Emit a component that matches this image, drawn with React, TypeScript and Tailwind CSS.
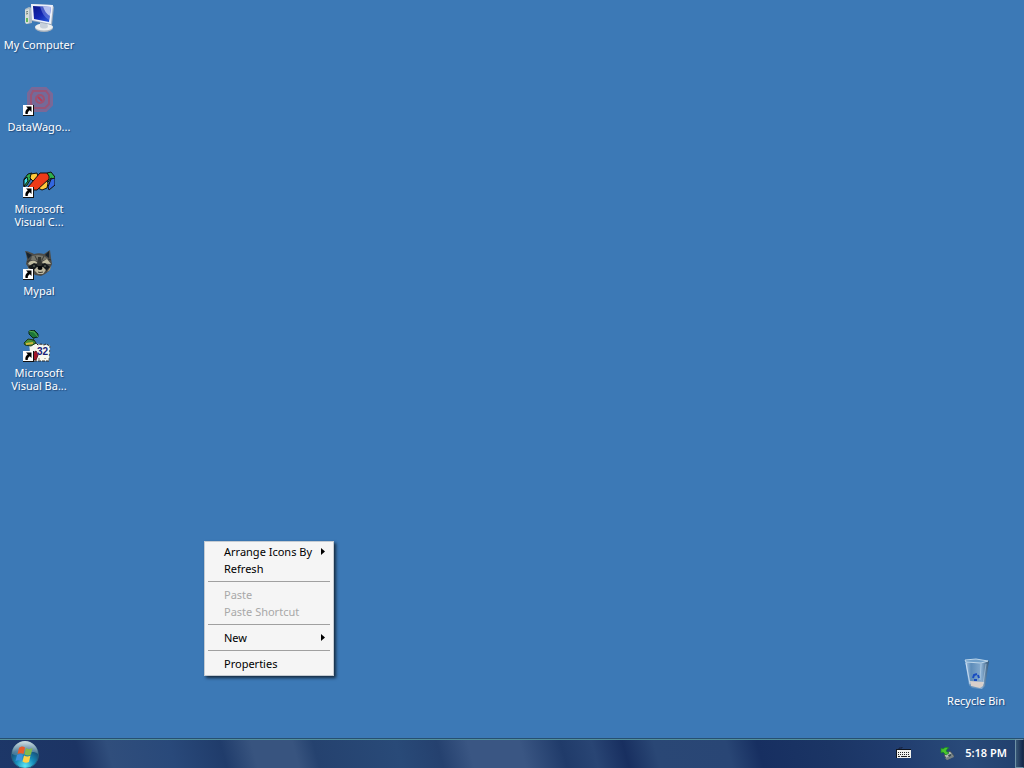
import React, { useState } from 'react';

type DesktopIconProps = {
  lines: string[];
  shortcut?: boolean;
  children: React.ReactNode;
};

const ShortcutArrow = () => (
  <g>
    <rect x="0" y="21" width="11" height="11" fill="#111" />
    <rect x="0" y="21" width="10" height="10" fill="#fff" />
    <path d="M3 22.500h5.500V28L6.800 26.300C5.300 27.300 4.600 28.400 4.800 30H2.500c-.5-2.400.3-4.200 2.300-5.700z" fill="#000" />
  </g>
);

const DesktopIcon = ({ lines, shortcut, children }: DesktopIconProps) => (
  <button type="button" className="flex h-[82px] w-[78px] flex-col items-center pt-[2px] text-white">
    <svg viewBox="0 0 32 32" className="size-8 shrink-0" aria-hidden="true">
      {children}
      {shortcut && <ShortcutArrow />}
    </svg>
    <span className="mt-1 text-center text-[11px] leading-[13px] [text-shadow:1px_1px_1px_rgba(10,30,70,0.5)]">
      {lines.map((line) => (
        <span key={line} className="block whitespace-nowrap">
          {line}
        </span>
      ))}
    </span>
  </button>
);

const ComputerArt = () => (
  <>
    <defs>
      <linearGradient id="screen" x1="0" y1="0" x2="1" y2="1">
        <stop offset="0" stopColor="#0a1788" />
        <stop offset="0.5" stopColor="#1226b4" />
        <stop offset="1" stopColor="#2c63e0" />
      </linearGradient>
    </defs>
    <path d="M2 7l4-2 3 1v15l-5 1-2-2z" fill="#aebcc6" />
    <path d="M2 8l4-1v14l-3 1-1-2z" fill="#d5dcd8" />
    <path d="M3 10l2-.5M3 12l2-.5" stroke="#697b70" />
    <path d="M3 16h2v4H3z" fill="#62b75b" />
    <ellipse cx="21" cy="26" rx="9" ry="4" fill="#a6b1bd" />
    <ellipse cx="21" cy="25" rx="9" ry="3.500" fill="#eef0f0" />
    <path d="M17 20h7l1 5c-2 2-6 2-8 0z" fill="#c7d0da" />
    <path d="M8 2l21 1 2 2-2 18-20-4z" fill="#9facbd" />
    <path d="M8 2l22 1-2 19L9 18z" fill="#edf1fa" />
    <path d="M10 4l18 1-2 15-15-3z" fill="url(#screen)" />
    <path d="M17 4.300l11 .7-2 13c-5-3-7-7-9-13.700z" fill="#6f83e0" opacity=".6" />
    <path d="M20 4.500l8 .5-1.200 9c-3.300-2-5.300-5-6.800-9.500z" fill="#e3ebff" opacity=".7" />
  </>
);

const WagonArt = () => (
  <g className="blur-[0.6px]" fill="none" stroke="#b04660">
    <path d="M9 4h14l6 6v11l-6 6H11l-6-6V9z" fill="#8c648e" stroke="#95618a" strokeWidth="2" opacity=".7" />
    <path d="M10 7h13l3 4v9l-4 4H11l-3-4v-9z" strokeWidth="2" opacity=".6" />
    <circle cx="17" cy="15" r="4" strokeWidth="2" opacity=".7" />
    <path d="M15 13l4 4" stroke="#c53248" strokeWidth="2" opacity=".8" />
  </g>
);

const VisualCArt = () => (
  <g stroke="#101010" strokeWidth="1" strokeLinejoin="round">
    <path d="M1 13l4-5 4-1v4l-5 8-3 2z" fill="#2fae4c" />
    <path d="M1 14l3-3 1 4-4 5z" fill="#3ad6e0" />
    <path d="M8 8l6-1 1 4-4 5-4-4z" fill="#ffc93c" />
    <path d="M24 7l4-1 4 5v3l-4-2-3 4-1-4z" fill="#2fae4c" />
    <path d="M28 13l4-1v7l-6 5-1-3z" fill="#3367e0" />
    <path d="M18 18l5-4 2 3-1 5-5 2-4-2z" fill="#ffc93c" />
    <path d="M5 21L17 7h7l2 3v3L14 24H8z" fill="#ee3a18" />
  </g>
);

const RaccoonArt = () => (
  <>
    <path d="M2 3c3 0 7 2 9 3 3-1 7-1 10 0l6-4 1 8 1 6-3 7-4 3-4 2-6-1-5-5-4-6 1-5-1-5z" fill="#4d4c48" />
    <path d="M3 4l6 3-4 4zM26 3l-4 4 4 3z" fill="#17222c" />
    <path d="M9 8l6-1 6 1 4 3-8 2-9-1z" fill="#75756b" />
    <path d="M5 16c1-3 4-4 7-3l3 2-8 2zM19 14l5-3 4 5-8-.500z" fill="#c3bea2" />
    <path d="M5 19l6-4 5 2 6-2 5 4-4 4-4-1-3-2-5 3z" fill="#15191b" />
    <path d="M15 9h3l1 8-2 2-3-2z" fill="#30322e" />
    <path d="M11 22l3-3h6l3 3-3 4h-5z" fill="#bdb79f" />
    <path d="M4 19l5 4-3-1zM28 18l-4 6 3-2z" fill="#a69570" />
    <ellipse cx="17" cy="20" rx="2.500" ry="2" fill="#050708" />
    <circle cx="11" cy="18" r=".8" fill="#75806f" />
    <circle cx="22" cy="18" r=".8" fill="#75806f" />
    <path d="M12 8l2 4M21 8l-2 4M7 12l-3 2M28 12l-3-1M15 24l2 .5 3-.5" stroke="#282a26" strokeWidth=".8" />
  </>
);

const VisualBasicArt = () => (
  <>
    <path d="M6 13l21 2-1 16H8z" fill="#f6f7ef" />
    <path d="M6 14l2-1 2 1 3-1 2 2 3-1 3 1 2-1 4 2M26 31H11" fill="none" stroke="#222" strokeDasharray="3 1" />
    <path d="M27 16l-1 15" stroke="#555" strokeDasharray="2 2" />
    <path d="M6 1l5-1 4 4v3l-5 1-4-4z" fill="#1c7639" stroke="#0a2417" />
    <path d="M6 1l5 1 4 5" fill="none" stroke="#56aa51" />
    <path d="M1 13l4-4 6 1 2 3-5 3-6-1z" fill="#458d35" stroke="#203615" />
    <path d="M3 14l7-1" stroke="#d0b83b" strokeWidth="2" />
    <path d="M11 8l-1 3" stroke="#183d20" />
    <path d="M10 23l3-2 2 4-2 5-3-1z" fill="#a51325" stroke="#641020" />
    <path d="M15 28h2v2h-2zM21 28h2v1h-2z" fill="#bbb7ac" />
    <text x="14" y="25" fontSize="10" fontWeight="700" fill="#162078" fontFamily="Liberation Sans, Arial, sans-serif">
      32
    </text>
  </>
);

const RecycleArt = () => (
  <>
    <defs>
      <linearGradient id="bin" x1="0" y1="0" x2="1" y2="0">
        <stop offset="0" stopColor="#bdd4ec" />
        <stop offset="0.25" stopColor="#608eb9" />
        <stop offset="0.7" stopColor="#8fb2d3" />
        <stop offset="1" stopColor="#34526e" />
      </linearGradient>
    </defs>
    <path d="M5 2l24 1-4 25-3 3-10-1-3-3z" fill="url(#bin)" opacity=".9" />
    <path d="M10 23l14 1-1 4-3 2-9-2z" fill="#d8cfca" />
    <path d="M5 2l11-1 12 2-7 2-15-1z" fill="#6f9fc9" stroke="#bdd6ea" />
    <path d="M6 5l4 21" stroke="#d6e7fa" opacity=".8" />
    <path d="M26 6l-3 20M21 6l-1 16" stroke="#d1e5f4" opacity=".45" />
    <path d="M13 20l1-3 3-1M18 17l1 3M17 22h-3" fill="none" stroke="#174bc1" strokeWidth="2" />
  </>
);

const MenuItem = ({ label, submenu, disabled }: { label: string; submenu?: boolean; disabled?: boolean }) => (
  <button
    type="button"
    role="menuitem"
    disabled={disabled}
    className="flex h-[17px] w-full items-center justify-between pr-[5px] pl-4 text-left text-black enabled:hover:bg-[#316ac5] enabled:hover:text-white disabled:text-[#a8a8a8]"
  >
    <span>{label}</span>
    {submenu && (
      <svg viewBox="0 0 4 7" className="h-[7px] w-1" aria-hidden="true">
        <path d="M0 0l4 3.500L0 7z" fill="currentColor" />
      </svg>
    )}
  </button>
);

const MenuSeparator = () => (
  <div role="separator" className="flex h-[9px] items-center">
    <span className="h-px w-full bg-[#a0a0a0]" />
  </div>
);

const ContextMenu = () => (
  <div
    role="menu"
    className="absolute top-[541px] left-[204px] w-[130px] border border-[#c4cbd2] bg-[#f5f5f5] px-[3px] pt-px pb-[3px] text-[11px] leading-[17px] shadow-[2px_2px_3px_rgba(0,0,0,0.65)]"
  >
    <MenuItem label="Arrange Icons By" submenu />
    <MenuItem label="Refresh" />
    <MenuSeparator />
    <MenuItem label="Paste" disabled />
    <MenuItem label="Paste Shortcut" disabled />
    <MenuSeparator />
    <MenuItem label="New" submenu />
    <MenuSeparator />
    <MenuItem label="Properties" />
  </div>
);

const StartOrb = () => (
  <svg viewBox="0 0 28 28" className="size-7" aria-hidden="true">
    <defs>
      <radialGradient id="orb" cx=".5" cy=".9" r=".85">
        <stop offset="0" stopColor="#5ce7f5" />
        <stop offset=".4" stopColor="#168bb8" />
        <stop offset=".75" stopColor="#16517b" />
        <stop offset="1" stopColor="#477489" />
      </radialGradient>
      <linearGradient id="gloss" x1="0" y1="0" x2="0" y2="1">
        <stop offset="0" stopColor="#e2edf0" stopOpacity=".9" />
        <stop offset="1" stopColor="#9bb8c5" stopOpacity=".25" />
      </linearGradient>
    </defs>
    <circle cx="14" cy="14" r="13.500" fill="url(#orb)" stroke="#285d7b" />
    <path d="M1 13a13 13 0 0 1 26 0c-4-3-8-2-13 0s-9 2-13 0z" fill="url(#gloss)" />
    <path d="M8 7c2-2 4-2 6-.5L12.500 13c-2-1-4-1-6 0z" fill="#e95b2b" />
    <path d="M15 7c2 1.500 4 1.500 6.500 0L20 13.500c-2 1.500-4 1-6.500 0z" fill="#83b94a" />
    <path d="M6 14c2-1 4-1 6 0l-1.500 6c-2-1-4-1-6 0z" fill="#3e91de" />
    <path d="M13 14.500c2 1 4 1.500 6.500 0L18 21c-2 1-4 1-6.500-.5z" fill="#ffd146" />
  </svg>
);

const KeyboardIcon = () => (
  <svg viewBox="0 0 16 14" className="h-[14px] w-4" aria-hidden="true">
    <path d="M3 3V1h3V0" fill="none" stroke="#17213e" />
    <rect x="0" y="2" width="15" height="9" fill="#10151f" />
    <rect x="1" y="3" width="14" height="8" fill="#f2f2ed" />
    <path d="M2 5.500h12M2 7.500h12" stroke="#222" strokeDasharray="1 1" />
    <path d="M2 9.500h2M5 9.500h6M12 9.500h2" stroke="#222" />
  </svg>
);

const SafelyRemoveIcon = () => (
  <svg viewBox="0 0 16 16" className="size-4" aria-hidden="true">
    <path d="M5 9l6-4 4 5-7 4z" fill="#b3bab5" stroke="#445059" />
    <path d="M6 12l8-3 1 2-7 3z" fill="#778285" />
    <path d="M9 9l3-1 1 1-3 2z" fill="#30464f" />
    <path d="M2 7V2l2 1c2-2 4-2 6-1-2 0-2 2-3 3l3 2-3 2-3-3z" fill="#49c52c" stroke="#168526" strokeWidth=".7" />
  </svg>
);

const App = () => {
  const [menuOpen, setMenuOpen] = useState(true);

  return (
    <div className="relative flex min-h-screen flex-col bg-[#3c79b6] font-['Noto_Sans','Open_Sans',sans-serif] select-none">
      <main className="flex flex-1 justify-between pr-[9px]" onClick={() => setMenuOpen(false)}>
        <div className="flex flex-col">
          <DesktopIcon lines={['My Computer']}>
            <ComputerArt />
          </DesktopIcon>
          <DesktopIcon lines={['DataWago...']} shortcut>
            <WagonArt />
          </DesktopIcon>
          <DesktopIcon lines={['Microsoft', 'Visual C...']} shortcut>
            <VisualCArt />
          </DesktopIcon>
          <DesktopIcon lines={['Mypal']} shortcut>
            <RaccoonArt />
          </DesktopIcon>
          <DesktopIcon lines={['Microsoft', 'Visual Ba...']} shortcut>
            <VisualBasicArt />
          </DesktopIcon>
        </div>
        <div className="flex flex-col justify-end">
          <DesktopIcon lines={['Recycle Bin']}>
            <RecycleArt />
          </DesktopIcon>
        </div>
      </main>

      {menuOpen && <ContextMenu />}

      <footer className="flex h-[30px] items-stretch justify-between border-t border-[#27506f] bg-[linear-gradient(75deg,#1d3768_0%,#1c3464_8%,#304e7c_11%,#29497a_17%,#203c6b_22%,#38547f_25%,#38547f_29%,#25426f_31%,#294a78_39%,#25416f_43%,#3a5683_46%,#3a5683_51%,#203b6a_55%,#294574_58%,#182f60_61%,#2a4775_64%,#294675_71%,#172f61_74%,#1b3565_81%,#203c6e_87%,#294a79_94%,#203f6c_100%)] shadow-[inset_0_1px_0_#54909b]">
        <button type="button" aria-label="Start" className="ml-[11px] flex items-start pt-[2px]">
          <StartOrb />
        </button>
        <div className="flex items-center">
          <button type="button" aria-label="Keyboard" className="mr-[27px]">
            <KeyboardIcon />
          </button>
          <button type="button" aria-label="Safely Remove Hardware" className="mr-[10px]">
            <SafelyRemoveIcon />
          </button>
          <time className="pb-[2px] text-[11px] leading-[13px] font-semibold text-white">5:18 PM</time>
          <button
            type="button"
            aria-label="Show desktop"
            className="ml-2 h-full w-[9px] border border-[#6e91a5] border-r-[#1a2c48] bg-gradient-to-r from-[#385876] to-[#14264a]"
          />
        </div>
      </footer>
    </div>
  );
};

export default App;
